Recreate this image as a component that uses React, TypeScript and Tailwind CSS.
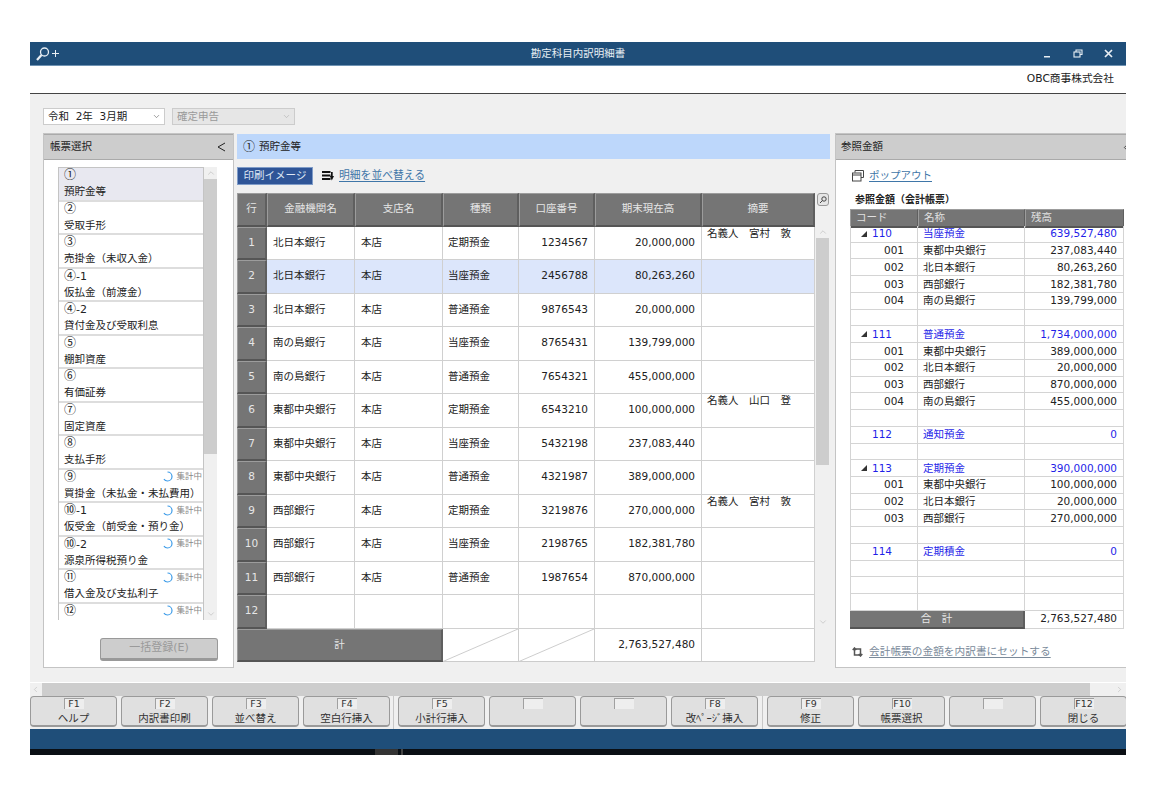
import React from "react";
import { ChevronDown, ChevronUp, ChevronLeft, ChevronRight } from "lucide-react";

const forms = [
  { no: "①", label: "預貯金等", selected: true },
  { no: "②", label: "受取手形" },
  { no: "③", label: "売掛金（未収入金）" },
  { no: "④-1", label: "仮払金（前渡金）" },
  { no: "④-2", label: "貸付金及び受取利息" },
  { no: "⑤", label: "棚卸資産" },
  { no: "⑥", label: "有価証券" },
  { no: "⑦", label: "固定資産" },
  { no: "⑧", label: "支払手形" },
  { no: "⑨", label: "買掛金（未払金・未払費用）", busy: true },
  { no: "⑩-1", label: "仮受金（前受金・預り金）", busy: true },
  { no: "⑩-2", label: "源泉所得税預り金", busy: true },
  { no: "⑪", label: "借入金及び支払利子", busy: true },
  { no: "⑫", label: "", busy: true },
];

const rows = [
  ["北日本銀行", "本店", "定期預金", "1234567", "20,000,000", "名義人　宮村　敦"],
  ["北日本銀行", "本店", "当座預金", "2456788", "80,263,260", ""],
  ["北日本銀行", "本店", "普通預金", "9876543", "20,000,000", ""],
  ["南の島銀行", "本店", "当座預金", "8765431", "139,799,000", ""],
  ["南の島銀行", "本店", "普通預金", "7654321", "455,000,000", ""],
  ["東都中央銀行", "本店", "定期預金", "6543210", "100,000,000", "名義人　山口　登"],
  ["東都中央銀行", "本店", "当座預金", "5432198", "237,083,440", ""],
  ["東都中央銀行", "本店", "普通預金", "4321987", "389,000,000", ""],
  ["西部銀行", "本店", "定期預金", "3219876", "270,000,000", "名義人　宮村　敦"],
  ["西部銀行", "本店", "当座預金", "2198765", "182,381,780", ""],
  ["西部銀行", "本店", "普通預金", "1987654", "870,000,000", ""],
  ["", "", "", "", "", ""],
];

const refs: { code?: string; name?: string; amount?: string; parent?: boolean; arrow?: boolean }[] = [
  { code: "110", name: "当座預金", amount: "639,527,480", parent: true, arrow: true },
  { code: "001", name: "東都中央銀行", amount: "237,083,440" },
  { code: "002", name: "北日本銀行", amount: "80,263,260" },
  { code: "003", name: "西部銀行", amount: "182,381,780" },
  { code: "004", name: "南の島銀行", amount: "139,799,000" },
  {},
  { code: "111", name: "普通預金", amount: "1,734,000,000", parent: true, arrow: true },
  { code: "001", name: "東都中央銀行", amount: "389,000,000" },
  { code: "002", name: "北日本銀行", amount: "20,000,000" },
  { code: "003", name: "西部銀行", amount: "870,000,000" },
  { code: "004", name: "南の島銀行", amount: "455,000,000" },
  {},
  { code: "112", name: "通知預金", amount: "0", parent: true },
  {},
  { code: "113", name: "定期預金", amount: "390,000,000", parent: true, arrow: true },
  { code: "001", name: "東都中央銀行", amount: "100,000,000" },
  { code: "002", name: "北日本銀行", amount: "20,000,000" },
  { code: "003", name: "西部銀行", amount: "270,000,000" },
  {},
  { code: "114", name: "定期積金", amount: "0", parent: true },
  {},
  {},
  {},
];

const fnKeys = [
  [["F1", "ヘルプ"], ["F2", "内訳書印刷"], ["F3", "並べ替え"], ["F4", "空白行挿入"]],
  [["F5", "小計行挿入"], ["", ""], ["", ""], ["F8", "改ﾍﾟｰｼﾞ挿入"]],
  [["F9", "修正"], ["F10", "帳票選択"], ["", ""], ["F12", "閉じる"]],
];

const mainCols = "grid grid-cols-[30px_88px_88px_76px_76px_107px_113px]";
const refCols = "grid grid-cols-[68px_107px_99px]";

const Spinner = () => (
  <svg width="11" height="11" viewBox="0 0 11 11" fill="none">
    <path d="M5.500 1a4.500 4.500 0 0 1 0 9 4.500 4.500 0 0 1-3.600-1.800" stroke="#3b9be8" strokeWidth="1.200" />
  </svg>
);

// circled number drawn from the CJK font, the rest stays in the latin one
const CircledNo = ({ no }: { no: string }) => (
  <span className="leading-[14px]">
    <span className="text-[12px] leading-[14px] [font-family:'Noto_Sans_CJK_JP',sans-serif]">{no.slice(0, 1)}</span>
    <span className="text-[11px] leading-[14px]">{no.slice(1)}</span>
  </span>
);

const Scrollbar = ({ thumb, after }: { thumb: string; after: string }) => (
  <div className="w-[13px] flex flex-col items-center bg-[#f0f0f0] shrink-0">
    <ChevronUp size={10} strokeWidth={1.2} className="text-[#aaa] my-[1px] shrink-0" />
    <div className={`w-full bg-[#cdcdcd] ${thumb}`} />
    <div className={`${after}`} />
    <ChevronDown size={10} strokeWidth={1.2} className="text-[#aaa] mt-auto mb-[1px] shrink-0" />
  </div>
);

const FnKey = ({ k, label }: { k: string; label: string }) => (
  <div className="w-[87px] h-[31px] shrink-0 flex flex-col items-center rounded-[4px] border border-[#9a9a9a] border-b-2 bg-[#e0e0e0] pt-[1px]">
    <div className="w-[20px] h-[11px] bg-[#eeeeee] border-l border-t border-[#a0a0a0] flex items-center justify-center text-[9.5px] leading-none text-[#333]">
      {k}
    </div>
    <div className="text-[10.5px] leading-[16px] mt-[1px] text-[#333]">{label}</div>
  </div>
);

export default function App() {
  return (
    <div className="w-[1156px] h-[796px] bg-white pt-[42px] pl-[30px] text-[10.5px] text-[#222] overflow-hidden [font-family:'DejaVu_Sans','Noto_Sans_CJK_JP',sans-serif]">
      <div className="w-[1096px] h-[713px] flex flex-col overflow-hidden">
        {/* title bar */}
        <div className="h-[24px] bg-[#1f4e79] border-b border-[#6f93b3] grid grid-cols-[1fr_auto_1fr] items-center px-[5px] text-[#e8eef4] shrink-0">
          <svg width="24" height="16" viewBox="0 0 24 16" fill="none" stroke="#e8eef4">
            <circle cx="9.500" cy="6" r="4" strokeWidth="1.300" />
            <path d="M6.500 9L2 14" strokeWidth="2.200" />
            <path d="M17 7.500h7M20.500 4v7" strokeWidth="1" />
          </svg>
          <div className="text-[10.5px]">勘定科目内訳明細書</div>
          <div className="flex items-center justify-end gap-[21px] pr-[8px]">
            <svg width="9" height="9" viewBox="0 0 9 9" fill="#e8eef4"><rect x="1" y="7" width="6" height="1.500" /></svg>
            <svg width="10" height="9" viewBox="0 0 10 9" fill="none" stroke="#e8eef4" strokeWidth="1.100">
              <rect x="1" y="3" width="6" height="5" />
              <path d="M3 3V1h6v4.500H7" />
            </svg>
            <svg width="9" height="9" viewBox="0 0 9 9" stroke="#e8eef4" strokeWidth="1.700"><path d="M1 1l7 7M8 1L1 8" /></svg>
          </div>
        </div>

        {/* company line */}
        <div className="h-[28px] bg-white border-b border-[#444] flex justify-end items-center pr-[12px] text-[10.7px] text-[#222] shrink-0">
          OBC商事株式会社
        </div>

        {/* main */}
        <div className="h-[588px] bg-[#f0f0f0] pl-[13px] pt-[14px] overflow-hidden shrink-0">
          <div className="flex gap-[7px] h-[17px]">
            <div className="w-[122px] bg-white border border-[#ccc] flex items-center justify-between pl-[4px] pr-[3px]">
              <span>令和&nbsp;&nbsp;2年&nbsp;&nbsp;3月期</span>
              <ChevronDown size={9} strokeWidth={1.5} className="text-[#555]" />
            </div>
            <div className="w-[123px] bg-[#e6e6e6] border border-[#ccc] flex items-center justify-between pl-[4px] pr-[3px] text-[#999]">
              <span>確定申告</span>
              <ChevronDown size={9} strokeWidth={1.5} className="text-[#aaa]" />
            </div>
          </div>

          <div className="flex mt-[8px] h-[535px]">
            {/* left panel */}
            <div className="w-[191px] shrink-0 bg-white border border-[#c4c4c4] flex flex-col">
              <div className="h-[26px] bg-[#cdcdcd] border-t border-b border-[#aaa] flex items-center justify-between pl-[6px] pr-[7px] shrink-0">
                <span>帳票選択</span>
                <svg width="9" height="10" viewBox="0 0 9 10" fill="none" stroke="#222" strokeWidth="1"><path d="M8 1L1 5l7 4" /></svg>
              </div>
              <div className="flex ml-[14px] mt-[7px] h-[453px]">
                <div className="w-[146px] border border-[#c4c4c4]">
                  {forms.map((f) => (
                    <div
                      key={f.no}
                      className={`pl-[5px] pr-[1px] flex flex-col shrink-0 ${f.label ? "h-[33.5px] border-b-2 border-[#ddd]" : "h-[16px]"} ${f.selected ? "bg-[#e8e8f0]" : "bg-white"}`}
                    >
                      <div className="h-[14px] flex items-center justify-between">
                        <CircledNo no={f.no} />
                        {f.busy && (
                          <span className="flex items-center gap-[3px] text-[8.5px] leading-[11px] text-[#888]">
                            <Spinner />
                            集計中
                          </span>
                        )}
                      </div>
                      {f.label && <div className="h-[16px] mt-[1px] leading-[16px] whitespace-nowrap">{f.label}</div>}
                    </div>
                  ))}
                </div>
                <Scrollbar thumb="h-[275px]" after="flex-1" />
              </div>
              <div className="flex justify-end pr-[15px] mt-[18px]">
                <div className="w-[118px] h-[23px] bg-[#cdcdcd] rounded-[3px] border border-[#999] border-b-[3px] flex items-center justify-center text-[#9a9a9a] text-[11px]">
                  一括登録(E)
                </div>
              </div>
            </div>

            {/* center */}
            <div className="w-[593px] shrink-0 ml-[3px]">
              <div className="h-[25px] mt-[1px] bg-[#bdd7fb] flex items-center pl-[6px] gap-[4px]">
                <CircledNo no="①" />
                <span>預貯金等</span>
              </div>
              <div className="flex items-center h-[18px] mt-[8px]">
                <div className="w-[76px] h-[18px] bg-[#2f5597] border border-[#7f9cc8] text-[#dfe8f5] flex items-center justify-center">
                  印刷イメージ
                </div>
                <svg className="ml-[9px]" width="12" height="10" viewBox="0 0 12 10" fill="#111">
                  <path d="M0 0h8.500v2H0zM0 3.500h8.500v2H0zM0 7h8.500v2H0zM9 1h1.700v4H12L9.800 9.500 7.800 5H9z" />
                </svg>
                <span className="ml-[5px] text-[10.8px] text-[#3f76a8] underline underline-offset-2">明細を並べ替える</span>
              </div>

              <div className="flex mt-[8px]">
                <div className="w-[578px] shrink-0 border-l border-[#bbb]">
                  {/* table head */}
                  <div className={`${mainCols} h-[33.5px] text-[#e6e6e6] -ml-[1px]`}>
                    {["行", "金融機関名", "支店名", "種類", "口座番号", "期末現在高", "摘要"].map((h) => (
                      <div
                        key={h}
                        className="bg-[#757575] border-t border-l border-[#9c9c9c] border-b-2 border-r-2 border-b-[#555] border-r-[#5f5f5f] flex items-center justify-center"
                      >
                        {h}
                      </div>
                    ))}
                  </div>

                  {/* table rows */}
                  {rows.map((r, i) => (
                    <div key={i} className={`${mainCols} h-[33.5px] -ml-[1px] ${i === 1 ? "bg-[#dce6fb]" : "bg-white"}`}>
                      <div className="bg-[#757575] text-[#e6e6e6] border-t border-l border-[#9c9c9c] border-b-2 border-r-2 border-b-[#555] border-r-[#5f5f5f] flex items-center justify-center">
                        {i + 1}
                      </div>
                      <div className="border-r border-b border-[#d0d0d0] flex items-center pl-[6px]">{r[0]}</div>
                      <div className="border-r border-b border-[#d0d0d0] flex items-center pl-[6px]">{r[1]}</div>
                      <div className="border-r border-b border-[#d0d0d0] flex items-center pl-[5px]">{r[2]}</div>
                      <div className="border-r border-b border-[#d0d0d0] flex items-center justify-end pr-[6px]">{r[3]}</div>
                      <div className="border-r border-b border-[#d0d0d0] flex items-center justify-end pr-[6px]">{r[4]}</div>
                      <div className="border-r border-b border-[#d0d0d0] pl-[5px] whitespace-nowrap leading-[12px]">{r[5]}</div>
                    </div>
                  ))}

                  {/* total */}
                  <div className={`${mainCols} h-[33.5px] -ml-[1px] bg-white`}>
                    <div className="col-span-3 bg-[#757575] text-[#e6e6e6] border-t border-l border-[#9c9c9c] border-b-2 border-r-2 border-b-[#555] border-r-[#5f5f5f] flex items-center justify-center">
                      計
                    </div>
                    {[0, 1].map((n) => (
                      <div key={n} className="relative border-r border-b border-[#ccc]">
                        <svg className="absolute inset-0 w-full h-full" viewBox="0 0 76 33" preserveAspectRatio="none">
                          <path d="M0 33L76 0" stroke="#ccc" strokeWidth="1" />
                        </svg>
                      </div>
                    ))}
                    <div className="border-r border-b border-[#ccc] flex items-center justify-end pr-[6px]">2,763,527,480</div>
                    <div className="border-r border-b border-[#ccc]" />
                  </div>
                </div>

                {/* table scroll */}
                <div className="w-[15px] pl-[1px] flex flex-col h-[469px]">
                  <div className="h-[33px] flex justify-center">
                    <div className="w-[12px] h-[13px] rounded-[3px] border border-[#999] bg-[#e6e6e6] flex items-center justify-center">
                      <svg width="8" height="8" viewBox="0 0 8 8" fill="none" stroke="#333" strokeWidth="0.900">
                        <circle cx="5" cy="3" r="2.200" />
                        <path d="M3.300 4.700L1 7" />
                      </svg>
                    </div>
                  </div>
                  <div className="h-[402px] flex">
                    <Scrollbar thumb="h-[227px]" after="flex-1" />
                  </div>
                </div>
              </div>
            </div>

            {/* right panel */}
            <div className="w-[300px] shrink-0 ml-[5px] bg-white border border-[#c4c4c4] flex flex-col">
              <div className="h-[26px] bg-[#cdcdcd] border-t border-b border-[#aaa] flex items-center justify-between pl-[5px] shrink-0">
                <span>参照金額</span>
                <span className="w-[12px] mr-[1px] flex"><ChevronLeft size={9} strokeWidth={2} className="text-[#222]" /></span>
              </div>
              <div className="flex items-center h-[14px] mt-[9px] ml-[16px]">
                <svg width="12" height="12" viewBox="0 0 12 12" fill="none" stroke="#444" strokeWidth="1">
                  <path d="M3 2.500V.5h8.500v7H9" />
                  <rect x=".5" y="3" width="8.500" height="8" />
                  <path d="M.5 5h8.500" />
                </svg>
                <span className="ml-[5px] text-[#3f76a8] underline underline-offset-2">ポップアウト</span>
              </div>
              <div className="ml-[19px] mt-[10px] h-[14px] leading-[14px] font-bold text-[10px] text-[#222]">参照金額（会計帳票）</div>

              <div className="ml-[14px] w-[274px] mt-[2px]">
                <div className={`${refCols} h-[17px] text-[#e0e0e0]`}>
                  {["コード", "名称", "残高"].map((h) => (
                    <div
                      key={h}
                      className="bg-[#757575] border-t border-l border-[#9c9c9c] border-b-2 border-r border-b-[#555] border-r-[#5f5f5f] flex items-center pl-[5px]"
                    >
                      {h}
                    </div>
                  ))}
                </div>
                {refs.map((r, i) => (
                  <div key={i} className={`${refCols} h-[16.74px] leading-[15px] bg-white ${r.parent ? "text-[#1f1fe8]" : ""}`}>
                    <div className="border-l border-r border-b border-[#d4d4d4] flex items-center">
                      {r.arrow && (
                        <svg className="ml-[10px]" width="6" height="6" viewBox="0 0 6 6" fill="#333"><path d="M6 0v6H0z" /></svg>
                      )}
                      {r.parent ? (
                        <span className={r.arrow ? "ml-[5px]" : "ml-[21px]"}>{r.code}</span>
                      ) : (
                        <span className="ml-[33px]">{r.code}</span>
                      )}
                    </div>
                    <div className="border-r border-b border-[#d4d4d4] flex items-center pl-[5px]">{r.name}</div>
                    <div className="border-r border-b border-[#d4d4d4] flex items-center justify-end pr-[6px]">{r.amount}</div>
                  </div>
                ))}
                <div className={`${refCols} h-[17px] bg-white`}>
                  <div className="col-span-2 bg-[#757575] text-[#e6e6e6] border-b-2 border-r-2 border-b-[#555] border-r-[#5f5f5f] flex items-center justify-center">
                    合　計
                  </div>
                  <div className="border-r border-b border-[#d4d4d4] flex items-center justify-end pr-[6px]">2,763,527,480</div>
                </div>
              </div>

              <div className="flex items-center h-[14px] mt-[17px] ml-[16px]">
                <svg width="11" height="10" viewBox="0 0 11 10" fill="none" stroke="#555" strokeWidth="1.500">
                  <path d="M2.500 1v7H8M.7 3l1.800-2L4.300 3" />
                  <path d="M8.500 9V2H3.500M6.700 7l1.800 2L10.300 7" />
                </svg>
                <span className="ml-[6px] text-[10.7px] text-[#7a8a9a] underline underline-offset-2">会計帳票の金額を内訳書にセットする</span>
              </div>
            </div>
          </div>
        </div>

        {/* bottom scrollbar */}
        <div className="h-[14px] border-t border-white bg-[#f0f0f0] flex items-center shrink-0">
          <ChevronLeft size={9} strokeWidth={1.2} className="text-[#aaa] ml-[1px] mr-[2px]" />
          <div className="w-[1048px] h-full bg-[#cdcdcd]" />
          <ChevronRight size={9} strokeWidth={1.2} className="text-[#aaa] ml-auto mr-[2px]" />
        </div>

        {/* function keys */}
        <div className="h-[33px] bg-[#f0f0f0] flex shrink-0">
          {fnKeys.map((group, g) => (
            <div key={g} className={`flex gap-[4px] ${g === 1 ? "ml-[3px] pl-[4px] border-l border-[#c8c8c8]" : ""} ${g === 2 ? "ml-[4px] pl-[4px] border-l border-[#c8c8c8]" : ""}`}>
              {group.map(([k, label], i) => (
                <FnKey key={i} k={k} label={label} />
              ))}
            </div>
          ))}
        </div>

        <div className="h-[20px] bg-[#1f4e79] shrink-0" />
        {/* strip of the desktop behind the window */}
        <div className="flex-1 bg-[#0a0f14] flex">
          <div className="w-[23px] ml-[345px] bg-[#333]" />
          <div className="w-[2px] ml-[3px] bg-[#444]" />
        </div>
      </div>
    </div>
  );
}
